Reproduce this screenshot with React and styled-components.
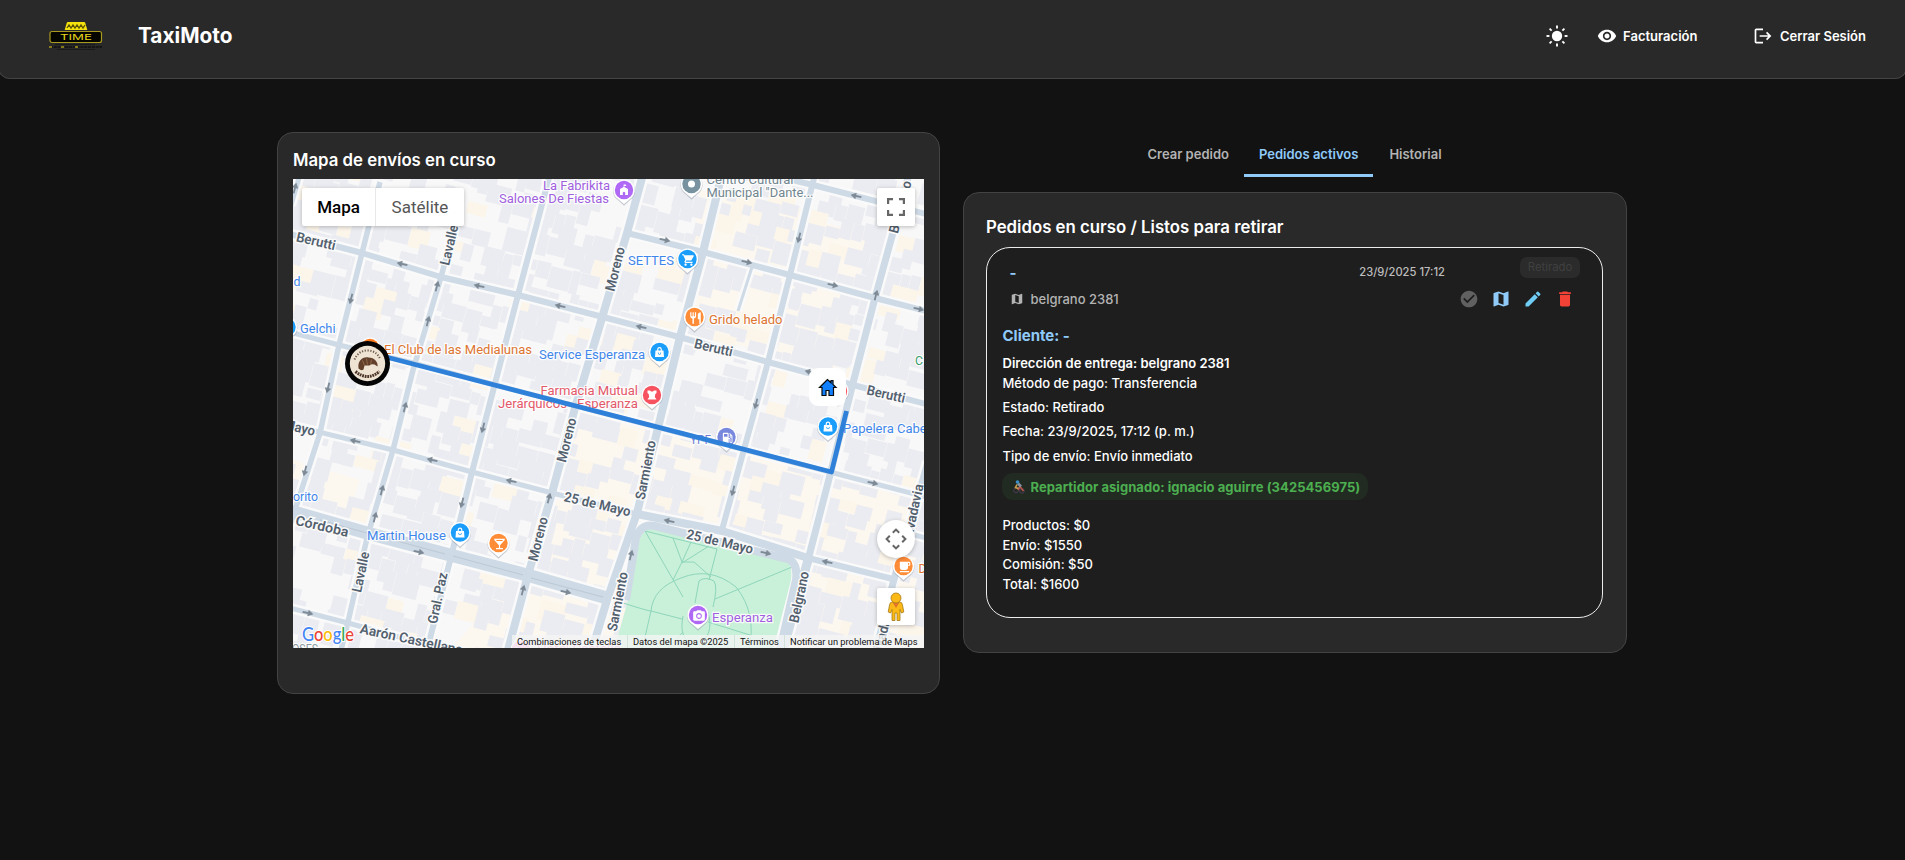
import React from "react";
import styled, { createGlobalStyle } from "styled-components";
import {
  MdVisibility,
  MdLogout,
  MdMap,
  MdCheckCircle,
  MdEdit,
  MdDelete,
  MdShoppingCart,
  MdRestaurant,
  MdLocalBar,
  MdLocalCafe,
  MdLocalGasStation,
  MdCameraAlt,
  MdHotel,
} from "react-icons/md";

const GlobalStyle = createGlobalStyle`
  * { box-sizing: border-box; }
  html, body { margin: 0; background: #121212; overflow: hidden; }
  body {
    font-family: Inter, "Liberation Sans", sans-serif;
    color: #fff;
    font-size: 14px;
  }
`;

const Page = styled.div`
  min-height: 860px;
  background: #121212;
`;

const Header = styled.header`
  height: 79px;
  margin: 0 -2px;
  padding: 0 40px 7px 50px;
  display: flex;
  align-items: center;
  background: #292929;
  border: 1px solid #444;
  border-top: 0;
  border-radius: 0 0 12px 12px;
`;

const Brand = styled.h1`
  margin: 0 0 0 35px;
  font-size: 20.8px;
  line-height: 30px;
  font-weight: 700;
  flex: 1;
`;

const SunButton = styled.span`
  display: flex;
  margin-right: 29px;
`;

const NavAction = styled.span`
  display: flex;
  align-items: center;
  gap: 6.5px;
  font-size: 13px;
  font-weight: 600;
  margin-right: ${(p) => p.$after || 0}px;
  svg { font-size: 20px; flex: none; }
`;

const Main = styled.main`
  width: 1350px;
  margin: 53px 0 0 277px;
  display: grid;
  grid-template-columns: 663px 664px;
  gap: 23px;
  align-items: start;
`;

const Panel = styled.section`
  background: #292929;
  border: 1px solid #434343;
  border-radius: 16px;
  height: ${(p) => p.$height}px;
  padding: ${(p) => p.$pad};
`;

const PanelTitle = styled.h2`
  margin: 0;
  font-size: 16.8px;
  line-height: 24px;
  font-weight: 600;
`;

const TabList = styled.nav`
  display: flex;
  justify-content: center;
  height: 45px;
  margin-bottom: 15px;
  padding-right: 2px;
`;

const Tab = styled.span`
  display: flex;
  align-items: center;
  padding: ${(p) => (p.$active ? "1px 15px 0" : "1px 15px 3px 16px")};
  font-size: 13px;
  font-weight: 600;
  color: ${(p) => (p.$active ? "#90caf9" : "#b3b3b3")};
  border-bottom: ${(p) => (p.$active ? "3px solid #90caf9" : "0")};
`;

const MapFrame = styled.div`
  position: relative;
  width: 631px;
  height: 469px;
  margin-top: 7px;
  overflow: hidden;
  font-family: Roboto, "Liberation Sans", sans-serif;
  > svg { display: block; }
`;

const Control = styled.div`
  position: absolute;
  display: flex;
  align-items: center;
  justify-content: center;
  background: #fff;
  box-shadow: 0 1px 4px rgba(0, 0, 0, 0.25);
`;

const MapTypes = styled(Control)`
  left: 9px;
  top: 9px;
  height: 38px;
  border-radius: 2px;
`;

const MapType = styled.span`
  width: ${(p) => p.$w}px;
  line-height: 38px;
  text-align: center;
  font-size: 17px;
  font-weight: ${(p) => (p.$on ? 500 : 400)};
  color: ${(p) => (p.$on ? "#000" : "#565656")};
  border-left: ${(p) => (p.$on ? "0" : "1px solid #e8e8e8")};
`;

const CornerControl = styled(Control)`
  right: 9px;
  top: ${(p) => p.$top}px;
  width: 38px;
  height: ${(p) => p.$h || 38}px;
  border-radius: ${(p) => (p.$round ? "50%" : "2px")};
`;

const Credits = styled.div`
  position: absolute;
  right: 0;
  bottom: 0;
  height: 13px;
  display: flex;
  font-size: 9.3px;
  line-height: 14px;
  color: #111;
  white-space: nowrap;
`;

const Credit = styled.span`
  width: ${(p) => p.$w}px;
  padding-left: 5px;
  background: rgba(245, 245, 245, 0.8);
  border-right: ${(p) => (p.$last ? "0" : "1px solid rgba(200,220,210,.7)")};
`;

const Order = styled.article`
  height: 371px;
  margin-top: 8px;
  padding: 0 16px 0 15.5px;
  border: 1px solid #ececec;
  border-radius: 24px;
  background: #1e1e1e;
`;

const OrderHead = styled.div`
  height: 74px;
  padding: 9px 6px 0 7px;
`;

const HeadRow = styled.div`
  display: flex;
  align-items: ${(p) => p.$align || "center"};
  height: ${(p) => p.$h}px;
`;

const OrderCode = styled.span`
  flex: 1;
  padding-top: 7px;
  line-height: 18px;
  font-size: 15px;
  font-weight: 700;
  color: #90caf9;
`;

const OrderDate = styled.span`
  margin-right: 75px;
  padding-top: 6px;
  line-height: 18px;
  font-size: 11.2px;
  font-weight: 500;
  color: #bdbdbd;
`;

const Chip = styled.span`
  width: 60px;
  height: 21px;
  border-radius: 7px;
  background: #2b2b2b;
  color: #404040;
  font-size: 11.3px;
  line-height: 21px;
  text-align: center;
`;

const Address = styled.span`
  flex: 1;
  display: flex;
  align-items: center;
  gap: 7px;
  font-size: 13px;
  font-weight: 500;
  color: #b3b3b3;
  svg { font-size: 14px; }
`;

const Actions = styled.span`
  display: flex;
  gap: 12px;
  margin-right: 5px;
  font-size: 20px;
`;

const ActionIcon = styled.span`
  display: flex;
  color: ${(p) => p.$color};
`;

const Client = styled.h3`
  margin: 0;
  font-size: 15px;
  line-height: 28px;
  font-weight: 700;
  color: #90caf9;
`;

const Line = styled.p`
  margin: 0 0 ${(p) => p.$gap || 0}px;
  font-size: 13px;
  line-height: ${(p) => p.$lh || 20}px;
  font-weight: ${(p) => (p.$strong ? 600 : 500)};
`;

const Courier = styled.div`
  display: flex;
  align-items: center;
  gap: 6px;
  width: 366px;
  height: 27px;
  margin: 5px 0 15px -1px;
  padding-left: 11px;
  border-radius: 11px;
  background: #222b22;
  color: #4caf50;
  font-size: 13px;
  font-weight: 700;
  letter-spacing: 0.05px;
  white-space: nowrap;
`;

function TimeLogo() {
  return (
    <svg width="54" height="30" viewBox="0 0 54 30">
      <path d="M19 1h16q1 0 1.300 1l2 7H15.700l2-7q.3-1 1.300-1z" fill="#f6e20d" />
      <path d="M18 7l2-3 2 3 2-3 2 3 2-3 2 3 2-3 2 3 2-3" fill="none" stroke="#575008" strokeWidth="1.300" />
      <rect x="1" y="10.500" width="51.500" height="11" rx="2" fill="#050500" stroke="#a89a1e" strokeWidth="1.200" />
      <text x="11" y="18.900" fontFamily="Inter, sans-serif" fontSize="8" fill="#e6d51b" textLength="32" lengthAdjust="spacingAndGlyphs">TIME</text>
      <path d="M6 23.500h40M8 28.500h38" stroke="#191919" />
      <path d="M1 26h52" stroke="#151515" strokeWidth="1.800" strokeDasharray="3 .8" />
      <path d="M0 26h3M12 26h3M26 26h3" stroke="#a89a1e" strokeWidth="1.400" />
    </svg>
  );
}

function SunIcon() {
  return (
    <svg width="22" height="22" viewBox="-11 -11 22 22">
      <circle r="5.200" fill="#fff" />
      {[0, 45, 90, 135, 180, 225, 270, 315].map((a) => (
        <path key={a} d="M7.600 0H10.500" stroke="#fff" strokeWidth="1.900" transform={`rotate(${a})`} />
      ))}
    </svg>
  );
}

/* ---- map drawing: coordinates share one space, offset by the viewBox ---- */

function glyph(d) {
  return function Glyph(props) {
    return (
      <svg viewBox="0 0 12 12" {...props}>
        <path d={d} fill="#fff" fillRule="evenodd" />
      </svg>
    );
  };
}

const BagGlyph = glyph("M2 4.500H10L10.500 11H1.500zM3.600 4.500V3.400Q3.800 1 6 1Q8.200 1 8.400 3.400V4.500H7.200V3.500Q7 2.200 6 2.200Q5 2.200 4.800 3.500V4.500zM4.200 6.500Q4.500 8.800 6 8.800Q7.500 8.800 7.800 6.500H7Q6.900 8 6 8Q5.100 8 5 6.500z");
const CastleGlyph = glyph("M5.600 .5H7.500L8.500 1.200L7.500 2H6.300V3L10 5V11H7.200V8.500Q6 7 4.800 8.500V11H2V5L5.600 3z");
const MortarGlyph = glyph("M1.500 1.500H4L5 2.500H7L8 1.500H10.500V4L9.300 5L8.800 8L10.500 10.500H1.500L3.200 8L2.700 5L1.500 4z");

const streets = [
  { w: 5.5, d: "M380 182L362 253L339 345L320 433L295 510L290 525" },
  { w: 5, d: "M299 178L291 205" },
  { w: 5.5, d: "M455 226L441 277L413 370L393 450L367 538L348 622L341 650" },
  { w: 6, d: "M549 178L518 295L472 472L452 553L427 650" },
  { w: 8, d: "M642 178L627 233L602 318L575 408L552 493L528 575L508 650" },
  { w: 8, d: "M721 178L703 252L680 337L658 428L637 513L607 600L592 650" },
  { w: 6, d: "M814 178L790 275L768 362L743 453L722 530" },
  { w: 7, d: "M908 178L875 298L853 383L830 475L808 560" },
  { w: 9, d: "M808 560L783 650" },
  { w: 7, d: "M928 462L893 583L876 650" },
  { w: 6, d: "M290 234L362 253L441 277L518 295L603 317L683 338L768 362L853 385L926 404" },
  { w: 6, d: "M627 233L703 252L790 275L875 298L926 311" },
  { w: 6, d: "M780 177L813 185L926 214" },
  { w: 5, d: "M290 332L339 345L413 363L488 383L660 428L830 472L926 497" },
  { w: 5, d: "M290 425L393 450L472 472L552 493L637 514" },
  { w: 8, d: "M637 514L722 531L808 558" },
  { w: 8, d: "M626 600L636 538Q641 523 655 526L788 559Q798 563 796 580L780 650" },
  { w: 6, d: "M808 558L893 579" },
  { w: 5, d: "M911 534L926 538" },
  { w: 13, d: "M290 511L367 533L450 555L527 575L607 598" },
  { w: 5, d: "M290 608L348 623L446 650" },
  { w: 3, d: "M752 267L738 311" },
];

const parkPaths = [
  "M645 531L683 597M645 531L717 549L709 580M673 538L682 562L673 580M691 542L682 562L694 562L711 577M682 563L709 546",
  "M623 603Q648 611 651 611L682 619M651 611Q653 588 681 578Q710 566 736 587Q757 613 749 650M651 611L642 650",
  "M715 599L792 567M695 603L699 581Q705 576 714 581Q718 587 713 607M683 616Q678 641 696 645Q715 637 708 612M708 622L750 635M683 632L668 648M706 636L715 650",
];

const arrows = [
  ...[[402, 264], [479, 286], [560, 306], [641, 327], [856, 196], [810, 372], [355, 441], [432, 460], [511, 481], [669, 521], [827, 562]].map((p) => [...p, 192]),
  ...[[665, 240], [747, 262], [833, 285], [919, 309], [419, 552], [566, 592], [308, 613], [873, 483], [766, 553]].map((p) => [...p, 13]),
  ...[[295, 188], [437, 286], [428, 321], [405, 407], [382, 490], [375, 517], [549, 498], [523, 590], [876, 295], [631, 555]].map((p) => [...p, -76]),
  ...[[351, 299], [328, 388], [305, 471], [483, 428], [462, 503], [799, 238], [756, 404], [733, 491]].map((p) => [...p, 104]),
];

const streetNames = [
  ["Berutti", 316, 241, 13, 40],
  ["Lavalle", 449, 245, -77, 41],
  ["Berutti", 713.5, 347.500, 13, 39],
  ["Berutti", 886, 394, 13, 39],
  ["Moreno", 615, 269, -76, 45],
  ["Moreno", 566.5, 440, -76, 45],
  ["Moreno", 538, 539, -76, 45],
  ["Sarmiento", 645.5, 470, -79, 60],
  ["Sarmiento", 617.5, 601.5, -79, 60],
  ["25 de Mayo", 597.5, 504, 13, 68],
  ["25 de Mayo", 720, 541.5, 13, 68],
  ["25 de Mayo", 282, 423.5, 13, 68],
  ["Av. Córdoba", 311, 523.5, 13, 77],
  ["Lavalle", 360.5, 572, -78, 41],
  ["Gral. Paz", 437.5, 598, -78, 52],
  ["Aarón Castellanos", 415, 640, 12, 112],
  ["Belgrano", 799, 597, -78, 52],
  ["Belgrano", 900, 207, -75, 54],
  ["Rivadavia", 913, 512, -78, 57],
  ["Rivadavia", 883, 630, -75, 57],
];

const placeNames = [
  ["La Fabrikita", 543, 190, 67, "#a05fdf"],
  ["Salones De Fiestas", 499, 203, 110, "#a05fdf"],
  ["Centro Cultural", 706.5, 183.5, 87, "#71858f"],
  ['Municipal "Dante...', 706.5, 196.5, 107, "#71858f"],
  ["SETTES", 628, 265, 46, "#3f86ea"],
  ["Grido helado", 709, 323.5, 73.5, "#dd7430"],
  ["Service Esperanza", 539, 358.5, 106, "#3f86ea"],
  ["Farmacia Mutual", 540.5, 394.5, 97.5, "#e4586a"],
  ["Jerárquicos - Esperanza", 498, 407.5, 140, "#e4586a"],
  ["YPF", 690, 444, 21, "#707fd5"],
  ["Papelera Cabezas", 843, 433, 104, "#3f86ea"],
  ["El Club de las Medialunas", 384, 354, 148, "#dd7430"],
  ["Gelchi", 300, 333, 35.5, "#3f86ea"],
  ["d", 293.5, 286, 7, "#3f86ea"],
  ["orito", 293, 501, 25, "#3f86ea"],
  ["Martin House", 367, 540, 79, "#3f86ea"],
  ["Esperanza", 712, 622, 61, "#a05fdf"],
  ["C", 915, 365, 8, "#3c9c6c"],
  ["D", 918.5, 573, 8, "#dd7430"],
  ["OSES", 292, 653, 26, "#8a979e"],
  ["Hotel Castellá", 537, 653, 84, "#ee84c8"],
];

const pins = [
  [624, 190, "#b069f5", CastleGlyph],
  [691.5, 184, "#78929f", null],
  [687.5, 259, "#1a9dfb", MdShoppingCart],
  [694.5, 317, "#ff8c37", MdRestaurant],
  [659.5, 352, "#1a9dfb", BagGlyph],
  [652, 395, "#f7525f", MortarGlyph],
  [726.5, 437, "#7888dc", MdLocalGasStation],
  [828, 426.5, "#1a9dfb", BagGlyph],
  [370, 348, "#ff7b20", null],
  [286.5, 327, "#1a9dfb", null],
  [460, 532.5, "#1a9dfb", BagGlyph],
  [498.5, 543, "#ff8c37", MdLocalBar],
  [698, 615, "#b069f5", MdCameraAlt],
  [903.5, 566, "#ff8c37", MdLocalCafe],
  [838, 391, "#f7525f", null],
  [521, 650, "#f59ad4", MdHotel],
];

function makeBuildings() {
  let seed = 4211;
  const rnd = () => {
    seed = (seed * 16807) % 2147483647;
    return seed / 2147483647;
  };
  const out = [];
  for (let v = -60; v < 900; v += 13) {
    let u = 0;
    while (u < 800) {
      const w = 8 + rnd() * 18;
      const h = 10 + rnd() * 14;
      const k = rnd();
      const warm = u > 330 ? 0.1 : 0.05;
      const dv = rnd() * 5;
      if (k < 0.56) out.push([u, v + dv, w, h, "#ebecf1"]);
      else if (k < 0.56 + warm) out.push([u, v + dv, w + 2, h, "#fcf5ea"]);
      u += w + 0.4;
    }
  }
  return out;
}

const buildings = makeBuildings();

function CityMap() {
  return (
    <svg width="631" height="469" viewBox="293 179 631 469" fontFamily="Roboto, sans-serif">
      <rect x="293" y="179" width="631" height="469" fill="#f8f8f8" />
      <path d="M585 410L925 500V650H450L530 560zM700 190L870 235L835 370L680 330zM293 460L360 480L345 525L293 510z" fill="#fcf6ec" opacity=".8" />
      <g transform="translate(293 179) rotate(14.500)">
        {buildings.map(([x, y, w, h, c], i) => (
          <rect key={i} x={x} y={y - 120} width={w} height={h} fill={c} />
        ))}
      </g>
      <g fill="none" stroke="#fafafa" strokeLinejoin="round">
        {streets.map((s) => <path key={s.d} d={s.d} strokeWidth={s.w + 5} />)}
      </g>
      <path d="M628 600L640 538Q644 527 652 528L785 560Q793 563 791 580L773 650H614z" fill="#c9f0d8" />
      <g fill="none" stroke="#8ed6bb" strokeWidth="1">
        {parkPaths.map((d) => <path key={d} d={d} />)}
      </g>
      <g fill="none" stroke="#cedae5" strokeLinejoin="round">
        {streets.map((s) => <path key={s.d} d={s.d} strokeWidth={s.w} />)}
      </g>
      <path d="M320 520L367 533M375 535L445 554M453 556L523 575M531 578L603 597" stroke="#bccad5" strokeWidth="1" fill="none" />
      {arrows.map(([x, y, a], i) => (
        <g key={i} transform={`translate(${x} ${y}) rotate(${a})`} fill="#7e8a95">
          <path d="M-5.500 -.9H0V-3.300L5.500 0L0 3.300V.9H-5.500z" />
        </g>
      ))}
      <g fontSize="13.700" fontWeight="600" fill="#53616f" stroke="#fafafa" strokeWidth="3" paintOrder="stroke" textAnchor="middle">
        {streetNames.map(([t, x, y, a, l], i) => (
          <text key={i} transform={`translate(${x} ${y}) rotate(${a})`} y="4.800" textLength={l} lengthAdjust="spacingAndGlyphs">{t}</text>
        ))}
      </g>
      <g fontSize="13.400" stroke="#fff" strokeWidth="2.500" strokeOpacity=".85" paintOrder="stroke">
        {placeNames.map(([t, x, y, l, c], i) => (
          <text key={i} x={x} y={y} fill={c} textLength={l} lengthAdjust="spacingAndGlyphs">{t}</text>
        ))}
      </g>
      {pins.map(([x, y, c, Icon], i) => (
        <g key={i} transform={`translate(${x} ${y})`}>
          <path d="M0 15L-6 9.500A11 11 0 1 1 6 9.500z" fill="#8d97a3" opacity=".45" transform="translate(0 .8)" />
          <path d="M0 14L-6 9A10.700 10.700 0 1 1 6 9z" fill="#fff" />
          <circle r="9.200" fill={c} />
          {Icon ? <Icon x="-6" y="-6" width="12" height="12" color="#fff" /> : <circle r="3.500" fill="#fff" />}
        </g>
      ))}
      <path d="M386 357L831.500 472L846.500 411" fill="none" stroke="#2f80d8" strokeWidth="4.800" strokeLinejoin="round" />
      <g transform="translate(367.500 363.500)">
        <circle r="22.500" fill="#050505" />
        <circle r="17.700" fill="#efe3d3" />
        <path d="M-9 5C-10 -3 -5 -7 1 -6C7 -6 11 -1 10 3L7 1Q4 0 2 2L-3 2L-4 6Q-6 8 -9 5z" fill="#63402b" />
        <path d="M-5 -3L-3 2M-1 -5L0 1M4 -4L3 1" stroke="#9a7252" strokeWidth=".8" />
        <path d="M-12 8Q0 18 12 8" fill="none" stroke="#4b3427" strokeWidth="3" strokeDasharray="1.800 .8" />
        <path d="M-13 -4Q-9 -13 0 -13Q9 -13 13 -4" fill="none" stroke="#6a574a" strokeWidth="2" strokeDasharray="1.200 1.600" />
      </g>
      <rect x="809" y="368" width="37" height="38" rx="9" fill="#fff" />
      <path d="M827.500 379.500L819.500 387.500H822V395.500H826V390.500H829V395.500H833.500V387.500H836L833 384.500V380.500H831V382.800z" fill="#1180ff" stroke="#0a0a0a" strokeWidth="1.200" />
      <g fontFamily="Lato, sans-serif" fontSize="19" fontWeight="500" stroke="#fff" strokeWidth="2" paintOrder="stroke">
        <text x="302" y="640.500" textLength="52" lengthAdjust="spacingAndGlyphs">
          <tspan fill="#4285f4">G</tspan><tspan fill="#ea4335">o</tspan><tspan fill="#fbbc04">o</tspan><tspan fill="#4285f4">g</tspan><tspan fill="#34a853">l</tspan><tspan fill="#ea4335">e</tspan>
        </text>
      </g>
    </svg>
  );
}

function FullscreenIcon() {
  return (
    <svg width="18" height="18" viewBox="0 0 18 18" fill="none" stroke="#666" strokeWidth="2.200">
      <path d="M1.100 6V1.100H6M12 1.100H16.900V6M16.900 12V16.900H12M6 16.900H1.100V12" />
    </svg>
  );
}

function PanIcon() {
  return (
    <svg width="22" height="22" viewBox="-11 -11 22 22" fill="none" stroke="#666" strokeWidth="2">
      {[0, 90, 180, 270].map((a) => (
        <path key={a} d="M-3.200 -6.200L0 -9.400L3.200 -6.200" transform={`rotate(${a})`} />
      ))}
    </svg>
  );
}

function Pegman() {
  return (
    <svg width="18" height="30" viewBox="0 0 18 30">
      <path d="M5 10H13Q15 10 15.500 13L16.800 20L14.500 21L13 17.500V28.500H10V21H8V28.500H5V17.500L3.500 21L1.200 20L2.500 13Q3 10 5 10z" fill="#fbb917" stroke="#a77b1b" strokeWidth=".8" />
      <path d="M5.500 10.200H12.500L9 16z" fill="#e0752a" />
      <circle cx="9" cy="6" r="5" fill="#fbb917" stroke="#a77b1b" strokeWidth=".8" />
    </svg>
  );
}

function RiderIcon() {
  return (
    <svg width="12" height="14" viewBox="0 0 12 14">
      <circle cx="3" cy="10.500" r="2.300" fill="none" stroke="#4a3a55" />
      <circle cx="9" cy="11" r="2.300" fill="none" stroke="#4a3a55" />
      <path d="M5 10L7 6.500L10.500 11" stroke="#b5534a" strokeWidth="1.800" fill="none" />
      <path d="M4 4.500L2.500 7.500L5.500 8.500" stroke="#d0a04c" strokeWidth="1.600" fill="none" />
      <path d="M5 3.500L8 6.500" stroke="#8a939d" strokeWidth="2.600" />
      <circle cx="4.500" cy="2" r="1.800" fill="#3b8fc4" />
    </svg>
  );
}

export default function App() {
  return (
    <Page>
      <GlobalStyle />
      <Header>
        <TimeLogo />
        <Brand>TaxiMoto</Brand>
        <SunButton><SunIcon /></SunButton>
        <NavAction $after={56}><MdVisibility />Facturación</NavAction>
        <NavAction><MdLogout />Cerrar Sesión</NavAction>
      </Header>
      <Main>
        <Panel $height={562} $pad="15px 15px">
          <PanelTitle>Mapa de envíos en curso</PanelTitle>
          <MapFrame>
            <CityMap />
            <MapTypes>
              <MapType $on $w={73}>Mapa</MapType>
              <MapType $w={89}>Satélite</MapType>
            </MapTypes>
            <CornerControl $top={9}><FullscreenIcon /></CornerControl>
            <CornerControl $top={341} $round><PanIcon /></CornerControl>
            <CornerControl $top={409} $h={37}><Pegman /></CornerControl>
            <Credits>
              <Credit $w={116}>Combinaciones de teclas</Credit>
              <Credit $w={107}>Datos del mapa ©2025</Credit>
              <Credit $w={50}>Términos</Credit>
              <Credit $w={139} $last>Notificar un problema de Maps</Credit>
            </Credits>
          </MapFrame>
        </Panel>
        <div>
          <TabList>
            <Tab>Crear pedido</Tab>
            <Tab $active>Pedidos activos</Tab>
            <Tab>Historial</Tab>
          </TabList>
          <Panel $height={461} $pad="22px 23px 0 22px">
            <PanelTitle>Pedidos en curso / Listos para retirar</PanelTitle>
            <Order>
              <OrderHead>
                <HeadRow $h={32} $align="flex-start">
                  <OrderCode>-</OrderCode>
                  <OrderDate>23/9/2025 17:12</OrderDate>
                  <Chip>Retirado</Chip>
                </HeadRow>
                <HeadRow $h={20}>
                  <Address><MdMap />belgrano 2381</Address>
                  <Actions>
                    <ActionIcon $color="#616161"><MdCheckCircle /></ActionIcon>
                    <ActionIcon $color="#90caf9"><MdMap /></ActionIcon>
                    <ActionIcon $color="#6fcdf5"><MdEdit /></ActionIcon>
                    <ActionIcon $color="#f44336"><MdDelete /></ActionIcon>
                  </Actions>
                </HeadRow>
              </OrderHead>
              <Client>Cliente: -</Client>
              <Line $strong $lh={27}>Dirección de entrega: belgrano 2381</Line>
              <Line $lh={12} $gap={6}>Método de pago: Transferencia</Line>
              <Line $lh={24}>Estado: Retirado</Line>
              <Line $lh={25}>Fecha: 23/9/2025, 17:12 (p. m.)</Line>
              <Line $lh={24}>Tipo de envío: Envío inmediato</Line>
              <Courier><RiderIcon />Repartidor asignado: ignacio aguirre (3425456975)</Courier>
              <Line>Productos: $0</Line>
              <Line>Envío: $1550</Line>
              <Line $lh={19}>Comisión: $50</Line>
              <Line>Total: $1600</Line>
            </Order>
          </Panel>
        </div>
      </Main>
    </Page>
  );
}
